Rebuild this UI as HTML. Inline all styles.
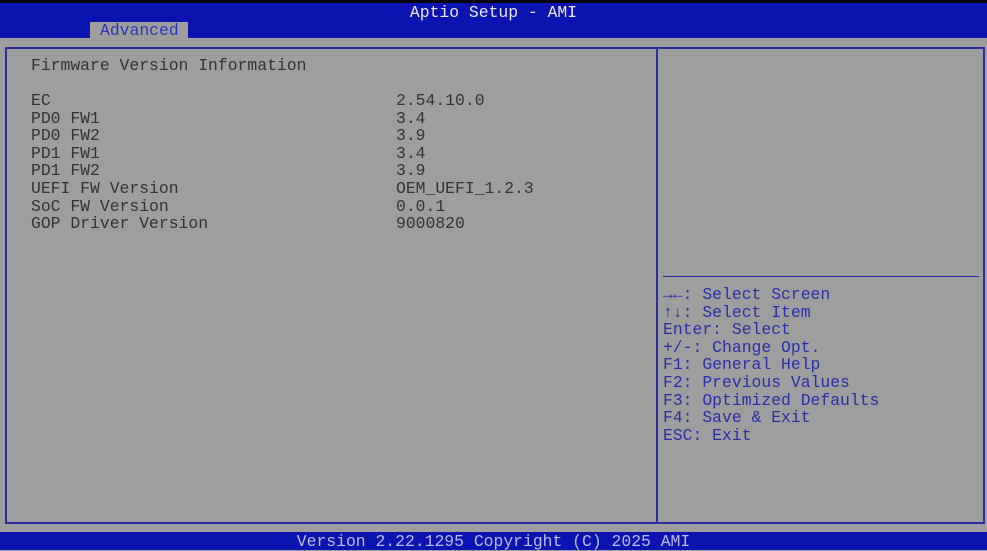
<!DOCTYPE html>
<html><head><meta charset="utf-8"><style>
*{margin:0;padding:0;box-sizing:border-box}
body{width:987px;height:550px;background:#9e9e9e;position:relative;overflow:hidden;font-family:"Liberation Mono","DejaVu Sans Mono",monospace;font-size:16.4px;line-height:17.6px}
.t{position:absolute;white-space:pre}
#top{position:absolute;left:0;top:0;width:987px;height:38px;background:#0d13b0;border-top:3px solid #000}
#tab{position:absolute;left:90px;top:22px;width:98px;height:16px;background:#9e9e9e;color:#2a36b8;line-height:17px;padding-left:10px}
#foot{position:absolute;left:0;top:532px;width:987px;height:18px;background:#0d13b0;color:#b8bce8;text-align:center;line-height:19px}
#box{position:absolute;left:5px;top:47px;width:980px;height:477px;border:2px solid #2a2ea0}
#div{position:absolute;left:656px;top:47px;width:2px;height:477px;background:#2a2ea0}
#hr{position:absolute;left:663px;top:276px;width:316px;height:1px;background:#2a2ea0}
.l{color:#333;left:31px}
.v{color:#333;left:396px}
.h{color:#2a2ea8;left:663px}
</style></head><body>
<div id="top"></div>
<div class="t" style="left:0;width:987px;top:4px;text-align:center;color:#e8e8f8">Aptio Setup - AMI</div>
<div id="tab">Advanced</div>
<div id="box"></div><div id="div"></div><div id="hr"></div>
<div class="t l" style="top:57px">Firmware Version Information</div>
<div class="t l" style="top:92px">EC</div><div class="t v" style="top:92px">2.54.10.0</div>
<div class="t l" style="top:110px">PD0 FW1</div><div class="t v" style="top:110px">3.4</div>
<div class="t l" style="top:127px">PD0 FW2</div><div class="t v" style="top:127px">3.9</div>
<div class="t l" style="top:145px">PD1 FW1</div><div class="t v" style="top:145px">3.4</div>
<div class="t l" style="top:162px">PD1 FW2</div><div class="t v" style="top:162px">3.9</div>
<div class="t l" style="top:180px">UEFI FW Version</div><div class="t v" style="top:180px">OEM_UEFI_1.2.3</div>
<div class="t l" style="top:198px">SoC FW Version</div><div class="t v" style="top:198px">0.0.1</div>
<div class="t l" style="top:215px">GOP Driver Version</div><div class="t v" style="top:215px">9000820</div>
<div class="t h" style="top:286px">→←: Select Screen</div>
<div class="t h" style="top:304px">↑↓: Select Item</div>
<div class="t h" style="top:321px">Enter: Select</div>
<div class="t h" style="top:339px">+/-: Change Opt.</div>
<div class="t h" style="top:356px">F1: General Help</div>
<div class="t h" style="top:374px">F2: Previous Values</div>
<div class="t h" style="top:392px">F3: Optimized Defaults</div>
<div class="t h" style="top:409px">F4: Save &amp; Exit</div>
<div class="t h" style="top:427px">ESC: Exit</div>
<div id="foot">Version 2.22.1295 Copyright (C) 2025 AMI</div>
</body></html>
